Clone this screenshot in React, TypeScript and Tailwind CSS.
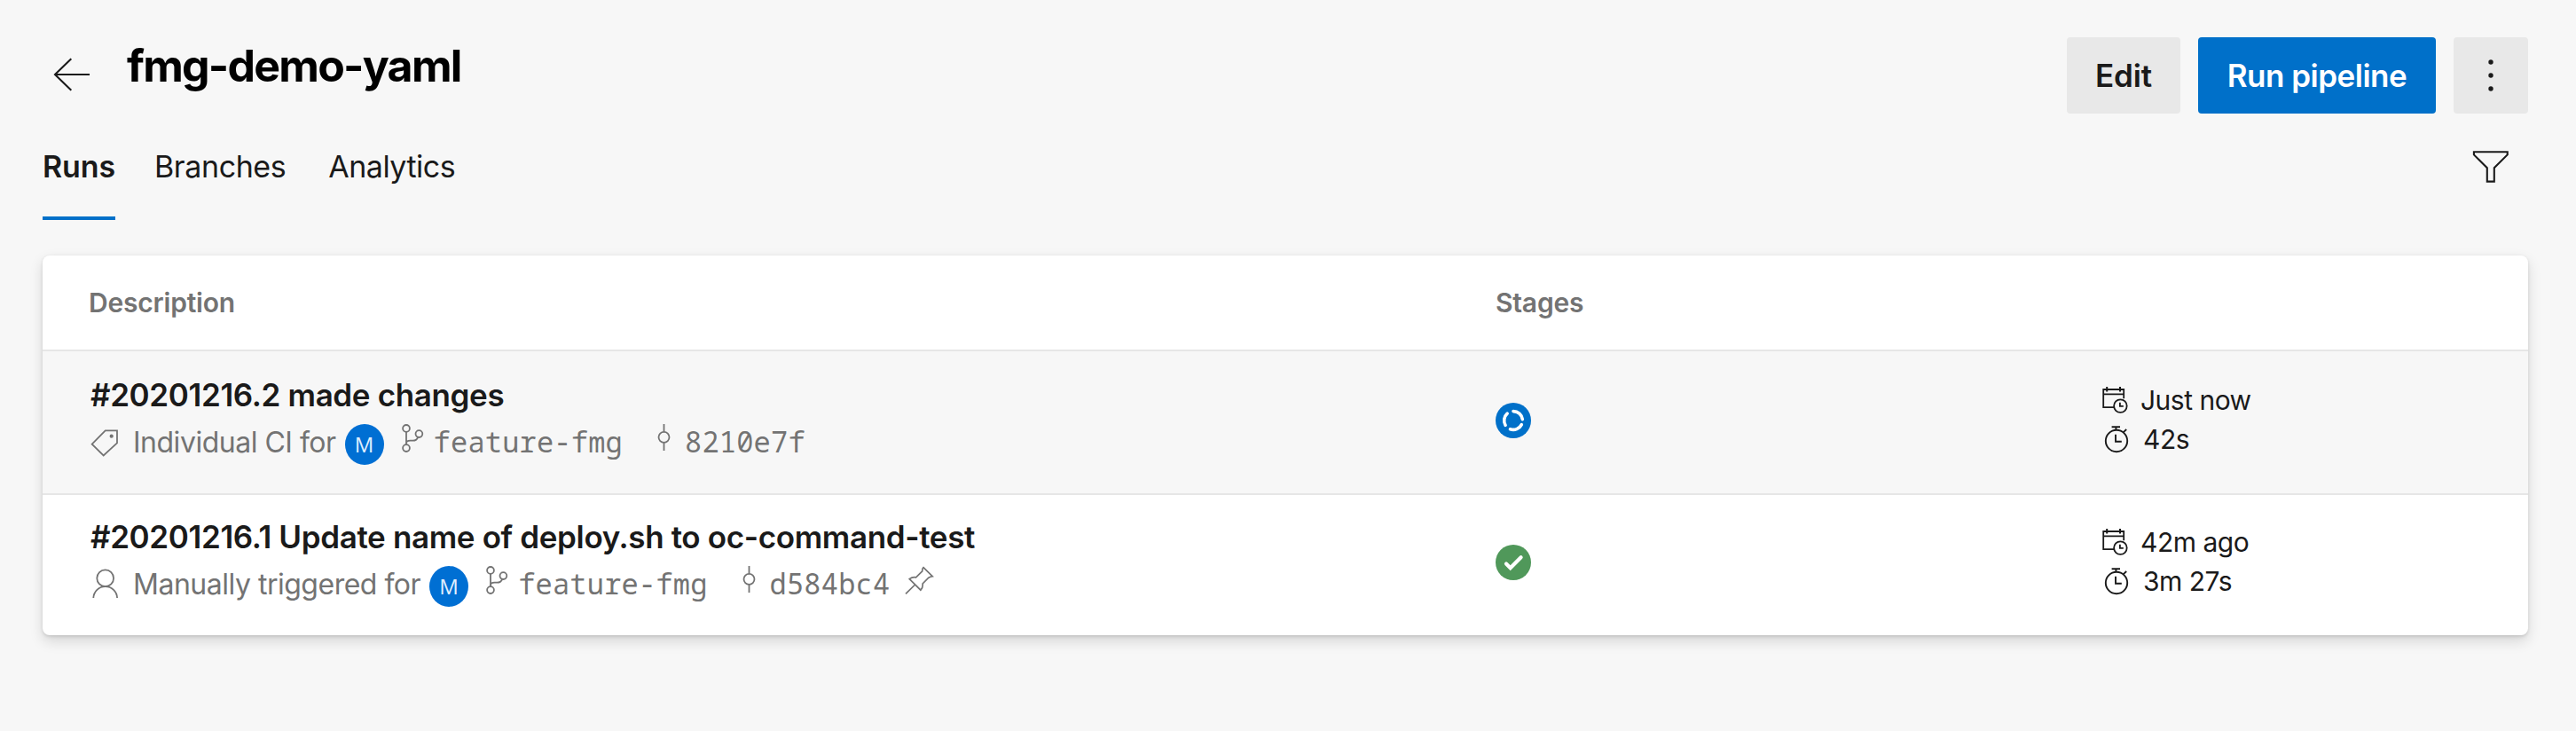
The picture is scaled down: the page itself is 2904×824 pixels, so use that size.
import type { ReactNode } from "react";

type Run = {
  title: string;
  trigger: string;
  triggerIcon: ReactNode;
  branch: string;
  commit: string;
  pinned: boolean;
  status: "running" | "success";
  started: string;
  duration: string;
  active: boolean;
};

const BackArrow = () => (
  <svg className="h-[38px] w-[42px]" viewBox="0 0 42 38" fill="none" stroke="currentColor" strokeWidth="2.1">
    <path d="M41 19H2M20.3 1.3L2 19l18.3 17.7" />
  </svg>
);

const Dots = () => (
  <svg className="h-[36px] w-[6px]" viewBox="0 0 6 36" fill="currentColor">
    <circle cx="3" cy="3" r="2.7" />
    <circle cx="3" cy="18" r="2.7" />
    <circle cx="3" cy="33" r="2.7" />
  </svg>
);

const Funnel = () => (
  <svg className="h-[40px] w-[44px]" viewBox="0 0 44 40" fill="none" stroke="currentColor" strokeWidth="2.1">
    <path d="M2.9 3.3H40.7V6.4L25.8 21.3V36.6H17.8V21.3L2.9 6.4Z" />
  </svg>
);

const Tag = () => (
  <svg className="h-[34px] w-[32px]" viewBox="0 0 32 34" fill="none" stroke="currentColor" strokeWidth="1.8">
    <path d="M1.7 16.7L16.7 1.3H30V15.3L14.7 29.4Z" />
    <circle cx="23.7" cy="7.7" r="2.1" fill="currentColor" stroke="none" />
  </svg>
);

const Person = () => (
  <svg className="-mt-[4px] h-[34px] w-[32px]" viewBox="0 0 32 34" fill="none" stroke="currentColor" strokeWidth="1.8">
    <circle cx="16.7" cy="11.7" r="9.4" />
    <path d="M3.3 34C3.7 26.6 9.4 21.2 16.7 21.2S29.8 26.6 30.1 34" />
  </svg>
);

const Branch = () => (
  <svg className="h-[32px] w-[25px]" viewBox="0 0 25 32" fill="none" stroke="currentColor" strokeWidth="1.8">
    <circle cx="5" cy="4.9" r="3.9" />
    <circle cx="19.4" cy="11.1" r="3.9" />
    <circle cx="5" cy="27.1" r="3.9" />
    <path d="M5 8.8V23.2M18.2 15Q16.4 18.7 12.5 18.7H9.5Q5 18.7 5 22" />
  </svg>
);

const Commit = () => (
  <svg className="h-[30px] w-[15px]" viewBox="0 0 15 30" fill="none" stroke="currentColor" strokeWidth="1.8">
    <circle cx="7.5" cy="14.8" r="6" />
    <path d="M7.5 0V8.8M7.5 20.8V30" />
  </svg>
);

const Pin = () => (
  <svg className="h-[32px] w-[33px]" viewBox="0 0 33 32" fill="none" stroke="currentColor" strokeWidth="1.7">
    <path d="M21 1.6L31.2 11.6Q28.6 12 26.8 13.2L20.1 20Q20.6 24.6 17.9 27.2L5.2 14.6Q8.6 12 12.6 12.8L19.7 5.8Q19.5 3 21 1.6ZM1 31.4L11.6 21" />
  </svg>
);

const CalendarClock = () => (
  <svg className="h-[32px] w-[29px]" viewBox="0 0 29 32" fill="none" stroke="currentColor" strokeWidth="1.8">
    <path d="M24.2 14.3V4H1.2V24.2H13M1.2 9.4H24.2" />
    <path d="M5.2 1V6.4M20 1V6.4" strokeWidth="2" />
    <circle cx="20.4" cy="22.6" r="7.3" />
    <path d="M19.9 18.8V22.8H23.8" />
  </svg>
);

const Stopwatch = () => (
  <svg className="h-[32px] w-[28px]" viewBox="0 0 28 32" fill="none" stroke="currentColor" strokeWidth="1.9">
    <circle cx="14" cy="17" r="12.2" />
    <path d="M8.6 1.2H18M13.4 1.2V4.8M21.6 7.4L25.2 4M13 9.7V17.8H19.8" />
  </svg>
);

const Status = ({ kind }: { kind: Run["status"] }) =>
  kind === "running" ? (
    <svg className="h-[40px] w-[40px]" viewBox="-20 -20 40 40">
      <circle r="20" fill="#0070c9" />
      <g fill="none" stroke="#fff" strokeWidth="3.6" strokeLinecap="round">
        <path d="M0 -10.4A10.4 10.4 0 0 1 10.3 -1.4" />
        <path d="M9.3 4.6A10.4 10.4 0 0 1 -3.5 9.8" />
        <path d="M-8.9 5.3A10.4 10.4 0 0 1 -6.8 -7.8" />
      </g>
    </svg>
  ) : (
    <svg className="h-[40px] w-[40px]" viewBox="-20 -20 40 40">
      <circle r="20" fill="#50985a" />
      <path d="M-8 1.5L-3.3 6.3L8.6 -5.8" fill="none" stroke="#fff" strokeWidth="4.2" strokeLinecap="round" />
    </svg>
  );

const runs: Run[] = [
  {
    title: "#20201216.2 made changes",
    trigger: "Individual CI for",
    triggerIcon: <Tag />,
    branch: "feature-fmg",
    commit: "8210e7f",
    pinned: false,
    status: "running",
    started: "Just now",
    duration: "42s",
    active: true,
  },
  {
    title: "#20201216.1 Update name of deploy.sh to oc-command-test",
    trigger: "Manually triggered for",
    triggerIcon: <Person />,
    branch: "feature-fmg",
    commit: "d584bc4",
    pinned: true,
    status: "success",
    started: "42m ago",
    duration: "3m 27s",
    active: false,
  },
];

const RunRow = ({ run }: { run: Run }) => (
  <div className="grid h-[160px] grid-cols-[1638px_684px_1fr_72px] whitespace-nowrap">
    <div className="flex flex-col pl-[54px] pt-[28px]">
      <h2 className="text-[35px] font-semibold leading-[43px] tracking-[-0.36px]">{run.title}</h2>
      <div className="mt-[11px] flex h-[46px] items-start text-[32px] leading-[41px] text-[#737373]">
        <span className="mt-[6px]">{run.triggerIcon}</span>
        <span className="ml-[16px] tracking-[-0.49px]">{run.trigger}</span>
        <span className="ml-[10px] flex h-[46px] w-[44px] items-center justify-center rounded-[50%] bg-[#006fd3] font-['Open_Sans',sans-serif] text-[24px] leading-none text-[#e0efff]">
          M
        </span>
        <span className="ml-[20px]">
          <Branch />
        </span>
        <span className="ml-[11px] font-['Noto_Sans_Mono','DejaVu_Sans_Mono',monospace] leading-[39px] tracking-[0.2px]">{run.branch}</span>
        <span className="ml-[39px]">
          <Commit />
        </span>
        <span className="ml-[16px] font-['Noto_Sans_Mono','DejaVu_Sans_Mono',monospace] leading-[39px] tracking-[0.2px]">{run.commit}</span>
        {run.pinned && (
          <span className="ml-[17px]">
            <Pin />
          </span>
        )}
      </div>
    </div>
    <div className="flex items-start pt-[58px]">
      <Status kind={run.status} />
    </div>
    <div className="flex flex-col pt-[34px] text-[30px] leading-[43px] tracking-[-0.5px]">
      <div className="flex h-[44px] items-start">
        <span className="mt-[5px]">
          <CalendarClock />
        </span>
        <span className="ml-[14px]">{run.started}</span>
      </div>
      <div className="flex h-[44px] items-start pl-[2px]">
        <span className="mt-[6px]">
          <Stopwatch />
        </span>
        <span className="ml-[16px]">{run.duration}</span>
      </div>
    </div>
    <div className="flex items-start justify-center pr-[72px] pt-[60px]">{run.active && <Dots />}</div>
  </div>
);

export default function App() {
  return (
    <div className="flex h-[824px] w-full flex-col bg-[#f7f7f7] pl-[48px] pr-[54px] pt-[42px] font-['Inter',sans-serif] text-[#1a1a1a]">
      <header className="flex h-[86px] items-start">
        <span className="ml-[12px] mt-[23px]">
          <BackArrow />
        </span>
        <h1 className="ml-[41px] text-[50px] font-bold leading-[64px] tracking-[-1.75px] text-black">fmg-demo-yaml</h1>
        <div className="ml-auto flex gap-[20px] text-[35px] font-semibold tracking-[-0.5px]">
          <button className="h-[86px] w-[128px] rounded-[4px] bg-[#e8e8e8] tracking-[-0.1px]">Edit</button>
          <button className="h-[86px] w-[268px] rounded-[4px] bg-[#0070c9] text-white">Run pipeline</button>
          <button className="flex h-[86px] w-[84px] items-center justify-center rounded-[4px] bg-[#e8e8e8]">
            <Dots />
          </button>
        </div>
      </header>

      <nav className="flex h-[120px] items-start text-[34px] leading-[40px]">
        <a className="h-[120px] w-[82px] border-b-4 border-[#0070c9] pt-[40px] font-semibold tracking-[-0.1px]">Runs</a>
        <a className="ml-[44px] pt-[40px] tracking-[-0.4px]">Branches</a>
        <a className="ml-[48px] pt-[40px] tracking-[-0.5px]">Analytics</a>
        <button className="ml-auto mr-[20px] mt-[40px]">
          <Funnel />
        </button>
      </nav>

      <main className="mt-[40px] flex flex-col overflow-hidden rounded-[8px] bg-white shadow-[0_6.4px_14.4px_rgba(0,0,0,0.132),0_1.2px_3.6px_rgba(0,0,0,0.108)]">
        <div className="grid h-[108px] grid-cols-[1638px_1fr] border-b-2 border-[#e6e6e6] text-[30px] font-semibold leading-[106px] tracking-[-0.2px] text-[#737373]">
          <span className="pl-[52px]">Description</span>
          <span>Stages</span>
        </div>
        <div className="h-[162px] border-b-2 border-[#e6e6e6] bg-[#f7f7f7]">
          <RunRow run={runs[0]} />
        </div>
        <div className="h-[158px]">
          <div className="-mt-[2px]">
            <RunRow run={runs[1]} />
          </div>
        </div>
      </main>
    </div>
  );
}
